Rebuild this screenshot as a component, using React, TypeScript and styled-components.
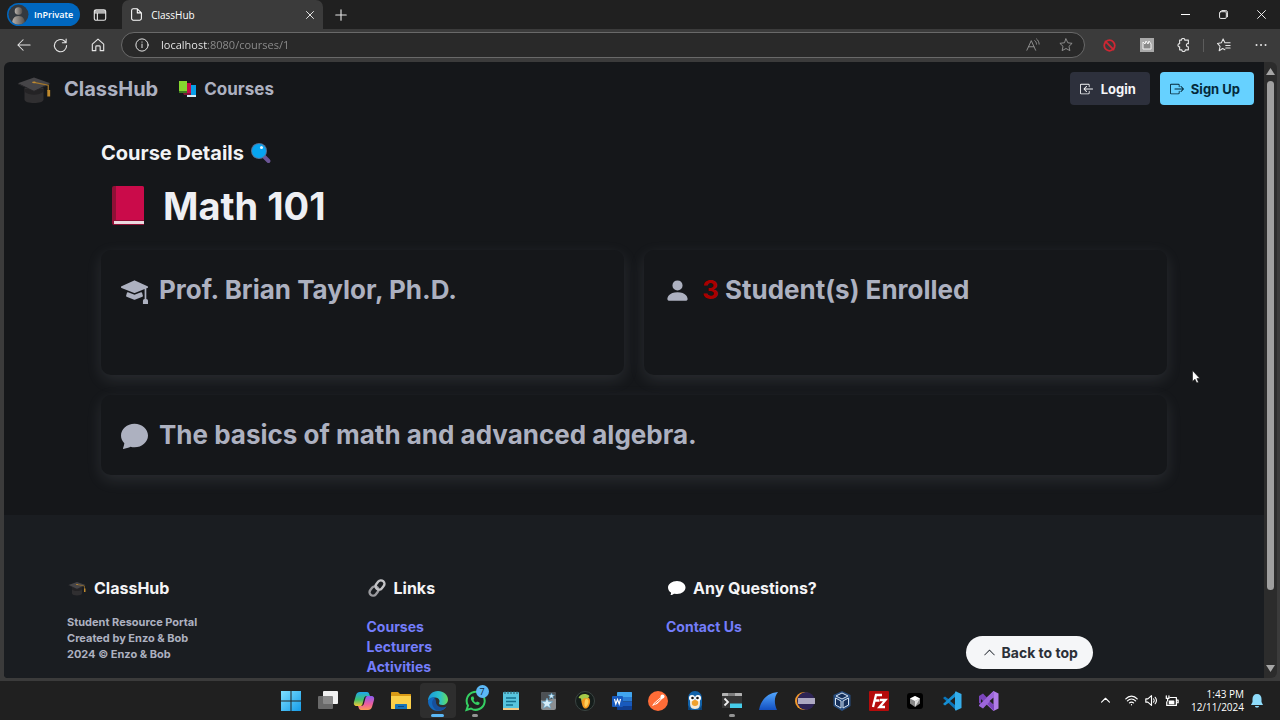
import React from 'react';
import styled, { createGlobalStyle } from 'styled-components';
import {
  BsBoxArrowInLeft,
  BsBoxArrowRight,
  BsChatFill,
  BsChevronUp,
  BsMortarboardFill,
  BsPersonFill,
} from 'react-icons/bs';

const GlobalStyle = createGlobalStyle`
  * { box-sizing: border-box; }
  html, body { margin: 0; background: #202020; }
  button { border: 0; padding: 0; background: none; color: inherit; font: inherit; }
  a { color: inherit; text-decoration: none; }
  h1, h2, h3, p, ul { margin: 0; padding: 0; }
  svg { display: block; flex: none; }
`;

const siteFont = "Inter, 'Liberation Sans', sans-serif";
const systemFont = "'Open Sans', 'Noto Sans', sans-serif";

/* ---------- browser window ---------- */

const Desktop = styled.div`
  position: relative;
  display: flex;
  flex-direction: column;
  height: 100vh;
  background: #3b3b3b;
  font-family: ${systemFont};
  color: #fff;
  overflow: hidden;
`;

const TabStrip = styled.header`
  display: flex;
  align-items: center;
  flex: none;
  height: 29px;
  padding-left: 7px;
  background: #202020;
`;

const ProfileButton = styled.button`
  display: flex;
  align-items: center;
  gap: 5px;
  height: 23px;
  padding: 0 7px 0 1px;
  border-radius: 12px;
  background: #0067bf;
  font-size: 9px;
  font-weight: 600;
`;

const ChromeButton = styled.button<{ $width?: number; $color?: string }>`
  display: flex;
  align-items: center;
  justify-content: center;
  flex: none;
  width: ${(p) => p.$width ?? 37}px;
  height: 28px;
  color: ${(p) => p.$color ?? '#e4e4e4'};
`;

const Tab = styled.div`
  display: flex;
  align-items: center;
  align-self: stretch;
  gap: 8px;
  width: 201px;
  margin-left: 3px;
  padding-left: 8px;
  border-radius: 7px 7px 0 0;
  background: #3b3b3b;
  font-size: 10px;
`;

const TabTitle = styled.span`
  flex: 1;
`;

const WindowControls = styled.div`
  display: flex;
  margin-left: auto;
`;

const Toolbar = styled.nav`
  display: flex;
  align-items: center;
  flex: none;
  height: 33px;
  padding: 0 1px 1px 5px;
`;

const AddressBar = styled.label`
  display: flex;
  align-items: center;
  flex: 1;
  height: 26px;
  margin: 0 6px 0 5px;
  padding: 0 2px 0 13px;
  border: 1px solid #696969;
  border-radius: 13px;
  background: #292929;
`;

const AddressInput = styled.input`
  flex: 1;
  min-width: 0;
  margin-left: 12px;
  padding: 0;
  border: 0;
  outline: 0;
  color: #9a9a9a;
  background: linear-gradient(to right, #f4f4f4 47px, #8f8f8f 47px);
  background-clip: text;
  -webkit-text-fill-color: transparent;
  font: 11px/20px ${systemFont};
`;

const Divider = styled.span`
  width: 1px;
  height: 13px;
  margin: 0 1px;
  background: #5c5c5c;
`;

const Viewport = styled.div`
  display: flex;
  flex: 1;
  min-height: 0;
  margin: 0 3px 3px 4px;
  border-radius: 6px 6px 6px 4px;
  overflow: hidden;
`;

const Scrollbar = styled.div`
  display: flex;
  flex-direction: column;
  align-items: center;
  flex: none;
  width: 13px;
  background: #2c2c2c;
`;

const ScrollArrow = styled.button`
  display: grid;
  place-items: center;
  width: 13px;
  height: 19px;
`;

const ScrollTrack = styled.div`
  flex: 1;
  width: 7px;
`;

const ScrollThumb = styled.div`
  height: 88%;
  border-radius: 4px;
  background: #9f9f9f;
`;

/* ---------- site ---------- */

const Site = styled.div`
  flex: 1;
  min-width: 0;
  overflow: hidden;
  background: #15171a;
  color: #adb1c0;
  font-family: ${siteFont};
  font-weight: 700;
`;

const NavBar = styled.nav`
  display: flex;
  align-items: center;
  gap: 10px;
  height: 53px;
  padding: 0 10px 0 11px;
`;

const Brand = styled.a`
  display: flex;
  align-items: center;
  gap: 11px;
  margin-right: 10px;
  font-size: 20px;
`;

const NavLink = styled.a`
  display: flex;
  align-items: center;
  gap: 6px;
  margin-right: auto;
  font-size: 17px;
`;

const NavButton = styled.button<{ $primary?: boolean }>`
  display: flex;
  align-items: center;
  gap: 7px;
  height: 33px;
  padding: 0 14px 0 10px;
  border-radius: 4px;
  background: ${(p) => (p.$primary ? '#66d1ff' : '#2d303c')};
  color: ${(p) => (p.$primary ? '#04293a' : '#f6f6f8')};
  font-size: 13px;
`;

const Main = styled.main`
  padding: 26px 97px 40px;
`;

const Eyebrow = styled.h2`
  display: flex;
  align-items: center;
  gap: 6px;
  color: #f2f3f5;
  font-size: 20px;
  line-height: 24px;
`;

const Title = styled.h1`
  display: flex;
  align-items: center;
  gap: 8px;
  margin: 17px 0 20px;
  color: #eeeff3;
  font-size: 38px;
  line-height: 48px;
`;

const Cards = styled.div`
  display: grid;
  grid-template-columns: 1fr 1fr;
  gap: 20px;
`;

const Card = styled.section<{ $wide?: boolean }>`
  grid-column: ${(p) => (p.$wide ? '1 / -1' : 'auto')};
  min-height: ${(p) => (p.$wide ? 80 : 125)}px;
  padding: 20px;
  border-radius: 10px;
  background: #15171a;
  box-shadow: 0 5px 15px rgba(173, 177, 192, 0.14);
`;

const CardTitle = styled.h3`
  display: flex;
  align-items: center;
  gap: 11px;
  font-size: 26px;
  line-height: 40px;
`;

const Count = styled.span`
  color: #a90000;
`;

const Footer = styled.footer`
  display: grid;
  grid-template-columns: repeat(4, 1fr);
  gap: 64px;
  padding: 61px 5% 40px;
  background: #1a1d21;
`;

const FooterHeading = styled.h3`
  display: flex;
  align-items: center;
  gap: 7px;
  color: #f4f4f6;
  font-size: 16px;
  line-height: 24px;
`;

const FooterText = styled.p`
  margin-top: 14px;
  font-size: 11px;
  line-height: 16px;
`;

const FooterLinks = styled.ul`
  margin-top: 17px;
  color: #747dfb;
  font-size: 14px;
  line-height: 20px;
  list-style: none;
`;

const BackToTop = styled.button`
  display: flex;
  align-items: center;
  gap: 6px;
  height: 33px;
  margin-top: 60px;
  padding: 0 15px 0 17px;
  border-radius: 17px;
  background: #f5f6f8;
  color: #2b3038;
  font-size: 14px;
  white-space: nowrap;
`;

/* ---------- taskbar ---------- */

const Taskbar = styled.footer`
  display: grid;
  grid-template-columns: 1fr minmax(0, 734px) 1fr;
  align-items: center;
  flex: none;
  height: 39px;
  background: #202020;
`;

const Apps = styled.div`
  grid-column: 2;
  display: flex;
  justify-content: space-between;
`;

const AppButton = styled.button<{ $active?: boolean; $running?: boolean }>`
  position: relative;
  display: grid;
  place-items: center;
  width: 36px;
  height: 35px;
  border-radius: 4px;
  background: ${(p) => (p.$active ? '#2e2e2e' : 'transparent')};
  &::after {
    content: '';
    position: absolute;
    bottom: 1px;
    width: ${(p) => (p.$active ? 13 : p.$running ? 6 : 0)}px;
    height: 3px;
    border-radius: 2px;
    background: ${(p) => (p.$active ? '#5cb8f5' : '#949494')};
  }
`;

const Badge = styled.span`
  position: absolute;
  top: 2px;
  right: 4px;
  width: 13px;
  height: 13px;
  border-radius: 50%;
  background: #5cb8f5;
  color: #10243a;
  font-size: 9px;
  line-height: 13px;
`;

const Tray = styled.div`
  display: flex;
  align-items: center;
  justify-content: flex-end;
  gap: 7px;
  padding-right: 17px;
`;

const Clock = styled.time`
  margin-left: 5px;
  font-size: 10px;
  line-height: 13px;
  text-align: right;
  white-space: nowrap;
`;

const TrayGap = styled.span`
  width: 1px;
`;

const Pointer = styled.svg`
  position: absolute;
  left: 1192px;
  top: 370px;
`;

/* ---------- drawings ---------- */

type LineProps = { size?: number; d: string; w?: number; children?: React.ReactNode };

const Line = ({ size = 16, d, w = 1, children }: LineProps) => (
  <svg width={size} height={size} viewBox="0 0 16 16" fill="none" stroke="currentColor" strokeWidth={w} strokeLinecap="round" strokeLinejoin="round">
    <path d={d} />
    {children}
  </svg>
);

const CapEmoji = ({ size }: { size: number }) => (
  <svg width={size} height={size} viewBox="0 0 40 40">
    <path d="M10 19v12c0 5 20 5 20 0V19z" fill="#302f31" />
    <path d="M10 23c5 4 15 4 20 0v-3H10z" fill="#242325" />
    <path d="M3 14 20 8l17 6-17 8z" fill="#464548" />
    <path d="M3 14v1l17 8 17-8v-1l-17 8z" fill="#29282b" />
    <path d="m20 13 15 3v6" fill="none" stroke="#a6782b" strokeWidth="1.3" />
    <path d="M34 21h3v7h-3z" fill="#c08a2d" />
    <ellipse cx="20" cy="13" rx="2" ry="1" fill="#bd8a35" />
  </svg>
);

const BooksEmoji = () => (
  <svg width="20" height="20" viewBox="0 0 20 20">
    <path d="M10 6h8v11h-8z" fill="#079ee8" />
    <path d="M9 16h9v2H9z" fill="#d7edf8" />
    <path d="M6 4h7v11H6z" fill="#c50c4a" />
    <path d="M5 14h8v2H6z" fill="#7d1434" />
    <path d="M1 2h8v11H1z" fill="#86d72f" />
    <path d="M1 12h8v2H1z" fill="#3c7a20" />
  </svg>
);

const LensEmoji = () => (
  <svg width="22" height="22" viewBox="0 0 22 22">
    <path d="m13.500 14 5 5" stroke="#6b5596" strokeWidth="4" strokeLinecap="round" />
    <circle cx="9" cy="9" r="8" fill="#55739a" />
    <circle cx="9" cy="9" r="7" fill="#07a5f1" />
    <circle cx="11.500" cy="5.500" r="1.500" fill="#e9f8ff" />
  </svg>
);

const BookEmoji = () => (
  <svg width="54" height="48" viewBox="0 0 54 48">
    <path d="M13 4h28a2 2 0 0 1 2 2v37H13a2 2 0 0 1-2-2V6a2 2 0 0 1 2-2z" fill="#8f1036" />
    <path d="M15 4h26a2 2 0 0 1 2 2v32H15z" fill="#ca0b4a" />
    <path d="M13 39h30v3H13z" fill="#ead9df" />
  </svg>
);

const LinkEmoji = () => (
  <svg width="20" height="20" viewBox="0 0 20 20" fill="none" strokeWidth="2.400">
    <rect x="-5" y="-3.500" width="10" height="7" rx="3.500" transform="translate(7 13) rotate(-50)" stroke="#9b9b9f" />
    <rect x="-5" y="-3.500" width="10" height="7" rx="3.500" transform="translate(13 7) rotate(-50)" stroke="#c4c4c7" />
  </svg>
);

const BubbleEmoji = () => (
  <svg width="20" height="20" viewBox="0 0 20 20">
    <path d="M11 3c5 0 8.500 3 8.500 6.500S16 16 11 16l-3-.3C7 16.500 6 17 4.500 17c.5-.8.6-1.600.5-2.400C3.300 13.500 2 11.700 2 9.500 2 6 6 3 11 3z" fill="#fff" />
  </svg>
);

const Avatar = () => (
  <svg width="21" height="21" viewBox="0 0 21 21">
    <defs>
      <clipPath id="avatar"><circle cx="10.500" cy="10.500" r="10" /></clipPath>
      <linearGradient id="body"><stop stopColor="#b9b2ac" /><stop offset="1" stopColor="#504d4b" /></linearGradient>
    </defs>
    <g clipPath="url(#avatar)">
      <path d="M0 0h21v21H0z" fill="#34393f" />
      <circle cx="10.500" cy="7" r="3.800" fill="url(#body)" />
      <path d="M4 21c0-6 2-9 6.500-9s6.500 3 6.500 9z" fill="url(#body)" />
    </g>
  </svg>
);

const Svg = ({ children }: { children: React.ReactNode }) => (
  <svg width="22" height="22" viewBox="0 0 22 22">{children}</svg>
);

type AppItem = { name: string; active?: boolean; running?: boolean; badge?: string; art: React.ReactNode };

const apps: AppItem[] = [
  { name: 'Start', art: <Svg><defs><linearGradient id="win" x2="1" y2="1"><stop stopColor="#7fe0ff" /><stop offset="1" stopColor="#149be8" /></linearGradient></defs><path d="M1 1h9.500v9.500H1zM11.500 1H21v9.500h-9.500zM1 11.500h9.500V21H1zM11.500 11.500H21V21h-9.500z" fill="url(#win)" /></Svg> },
  { name: 'Task view', art: <Svg><rect x="6" y="1" width="15" height="13" rx="1" fill="#f1f1f1" /><rect x="1" y="6" width="15" height="13" rx="1" fill="#777" fillOpacity=".85" /></Svg> },
  { name: 'Copilot', art: <Svg><defs><linearGradient id="cpa" x2="0" y2="1"><stop stopColor="#1ea7ee" /><stop offset=".55" stopColor="#41c26b" /><stop offset="1" stopColor="#f5c636" /></linearGradient><linearGradient id="cpb" x2="0" y2="1"><stop stopColor="#8a5cf0" /><stop offset=".6" stopColor="#ef5f9c" /><stop offset="1" stopColor="#fb9a55" /></linearGradient></defs><path d="M7 2h7c1.500 0 2 1 2.400 2.500L17 6h-3c-2 0-2.600 1-3 2.500L9.500 14c-.5 1.500-1 2-2.500 2H4c-3 0-3.500-2-3-4l2-7c.6-2 2-3 4-3z" fill="url(#cpa)" /><path d="M15 20H8c-1.500 0-2-1-2.400-2.500L5 16h3c2 0 2.600-1 3-2.500L12.500 8c.5-1.500 1-2 2.500-2h3c3 0 3.500 2 3 4l-2 7c-.6 2-2 3-4 3z" fill="url(#cpb)" /></Svg> },
  { name: 'File Explorer', art: <Svg><path d="M1 3c0-1 .5-1 1-1h6l2 2h10c1 0 1 .5 1 1v5H1z" fill="#d99a16" /><path d="M1 6h20v12c0 1-.5 1-1 1H2c-1 0-1-.5-1-1z" fill="#fbd04a" /><path d="M5 19v-4c0-1 .5-1 1-1h10c1 0 1 .5 1 1v4z" fill="#1673b8" /><path d="M8 16h6v1H8z" fill="#0c4980" /></Svg> },
  { name: 'Edge', active: true, art: <Svg><defs><linearGradient id="eda"><stop stopColor="#1698dc" /><stop offset=".6" stopColor="#2cc2c7" /><stop offset="1" stopColor="#66dc58" /></linearGradient></defs><path d="M1 11C1 5 5.500 1 11 1s10 4 10 8.500c0 3.500-2.500 5.500-5.500 5.500-2.500 0-3.800-1-3.500-2 1-1 1-5.500-4-5.500-3.500 0-6 2-7 3.500z" fill="url(#eda)" /><path d="M1 11c1-3 4-4.300 7-3.500-2 2-2 9 4 11 3 .8 5.800-.8 7.500-2C18 19 15 21 11 21 5 21 1 16.500 1 11z" fill="#1268bd" /><path d="M8 8c-4 2-4 8 1 12 4 1.500 8 0 10.500-3.500C13 19 8.500 15.500 9 11z" fill="#174f9b" /></Svg> },
  { name: 'WhatsApp', running: true, badge: '7', art: <Svg><path d="M2.500 20 4 15.500A9 9 0 1 1 7 18.500z" fill="none" stroke="#35cf62" strokeWidth="2" /><path d="M8 6.500c-2 1-1 4 1 6s5 3.500 6.500 1.500v-1.500L13 11.500l-1 1c-1 0-2.500-2-2.500-2.500l.7-1.200L9.500 6.500z" fill="#35cf62" /></Svg> },
  { name: 'Notepad', art: <Svg><rect x="3" y="2" width="16" height="18" rx="1" fill="#58c5df" /><path d="M3 18h16v2H3z" fill="#f2c984" /><path d="M6 8h10M6 11.500h10M6 15h7" stroke="#13708e" strokeWidth="1.300" /><path d="M5 1v3M8 1v3M11 1v3M14 1v3M17 1v3" stroke="#2a5463" /></Svg> },
  { name: 'Anki', art: <Svg><rect x="4" y="2" width="15" height="18" rx="2" fill="#8b8e91" /><path d="M6 2h11c1.500 0 2 1 2 2v5c-5-1-9 3-15 1V4c0-1 .5-2 2-2z" fill="#4d5155" /><path d="m10 8 1.500 3.500 4 .3-3 2.500 1 4L10 16l-3.500 2.300 1-4-3-2.500 4-.3zM14.500 3l.8 2 2.200.2-1.700 1.300.6 2.200-1.900-1.200-2 1.200.6-2.200-1.600-1.300 2.200-.2z" fill="#d6eefa" stroke="#5ba3cd" strokeWidth=".6" /></Svg> },
  { name: 'FL Studio', art: <Svg><circle cx="11" cy="11" r="9.500" fill="#151d1b" stroke="#3a4442" /><path d="M9 8c3-2 6.500-1 7 2 .5 4-1.500 8-4 8.500S8.500 16 8 14 6.500 9.500 9 8z" fill="#f49a20" /><path d="M12 9c3 0 3 3 1.500 6s-3 2-3 0 0-5 1.500-6z" fill="#ffd05a" /><path d="M4.500 8c1.500-4 7-5.500 11-2l-2 2.500L10 8l-2.500 3L7 8.500z" fill="#a3c94a" /></Svg> },
  { name: 'Word', art: <Svg><path d="M7 2h13c1 0 1 .5 1 1v4H6V3c0-1 .5-1 1-1z" fill="#41a5ee" /><path d="M6 7h15v4.500H6z" fill="#2b7cd3" /><path d="M6 11.500h15V16H6z" fill="#185abd" /><path d="M6 16h15v3c0 1-.5 1-1 1H7c-1 0-1-.5-1-1z" fill="#103f91" /><rect x="1" y="6" width="11" height="11" rx="1" fill="#185abd" /><path d="m3.500 9 1.300 5L6.500 9.500 8.200 14l1.300-5" fill="none" stroke="#fff" strokeWidth="1.200" /></Svg> },
  { name: 'Postman', art: <Svg><circle cx="11" cy="11" r="10" fill="#ff6c37" /><path d="m5 16 2-3 7-6 2 1-6 6z" fill="#fff" /><circle cx="15.500" cy="6.500" r="2" fill="#fff" /><path d="m7.500 14 6-5" stroke="#ff6c37" /></Svg> },
  { name: 'Penguin', art: <Svg><path d="M4 20V9c0-5 3-8 7-8s7 3 7 8v11z" fill="#1262a8" /><path d="M6 10c0 6 0 9 5 9s5-3 5-9z" fill="#f3ead8" /><circle cx="8" cy="8" r="3" fill="#fff" /><circle cx="14" cy="8" r="3" fill="#fff" /><circle cx="8.500" cy="8" r="1.300" fill="#111" /><circle cx="13.500" cy="8" r="1.300" fill="#111" /><ellipse cx="11" cy="13" rx="3.200" ry="3" fill="#f0a12c" /><path d="M4 20v-5l3 5zM18 20v-5l-3 5z" fill="#0d4277" /></Svg> },
  { name: 'Terminal', running: true, art: <Svg><path d="M1 4c0-1 .5-1 1-1h18c1 0 1 .5 1 1v3H1z" fill="#b2b2b2" /><path d="M7 3h7v4H7z" fill="#7d7d7d" /><path d="M1 6h20v12H1z" fill="#363636" /><path d="m3.500 8.500 3.500 3.500L3.500 15.500" fill="none" stroke="#eee" strokeWidth="1.800" /><path d="M9 13.500h12V18H9z" fill="#46cdea" /></Svg> },
  { name: 'Wireshark', art: <Svg><defs><linearGradient id="shark" x2="0" y2="1"><stop stopColor="#53a8ff" /><stop offset="1" stopColor="#124fc0" /></linearGradient></defs><path d="M1 20C3 10 9 3 20 2c-4 5-4 11-1 18z" fill="url(#shark)" /></Svg> },
  { name: 'Eclipse', art: <Svg><circle cx="10" cy="11" r="9" fill="#f39a2b" /><circle cx="12" cy="11" r="9" fill="#2e2455" /><path d="M4 9h17M4 11h17M4 13h17" stroke="#d8d5e6" strokeWidth="1.500" /></Svg> },
  { name: 'VirtualBox', art: <Svg><path d="m11 1 8.500 4v11L11 21l-8.500-5V5z" fill="#284e80" /><path d="m11 3 6 3-6 3-6-3zM4.500 8 10 11v7l-5.500-3zM17.500 8 12 11v7l5.500-3z" fill="#16305a" stroke="#d5e3f2" /></Svg> },
  { name: 'FileZilla', art: <Svg><rect x="1" y="1" width="20" height="20" rx="1" fill="#b50b0b" /><path d="M5 17 8 5h6M6.500 10.500h5M12 10h5.500l-6 7H17" fill="none" stroke="#fff" strokeWidth="2.300" /></Svg> },
  { name: 'Cursor', art: <Svg><rect x="3" y="3" width="16" height="16" rx="3" fill="#000" /><path d="m11 6 5 2.500v5L11 17l-5-3.500v-5z" fill="#888" /><path d="m11 6 5 2.500L11 11 6 8.500z" fill="#fff" /><path d="M16 8.500 11 17v-6z" fill="#ddd" /></Svg> },
  { name: 'VS Code', art: <Svg><path d="m2 8 2-1.500L15.500 15v5.500z" fill="#0a75bb" /><path d="m2 14 2 1.500L15.500 7V1.500z" fill="#168fd3" /><path d="M15 1.500 20.500 4v14L15 20.500c-.8 0-1-.5-1-1v-17c0-.5.2-1 1-1z" fill="#35aeeb" /><path d="m14 7-5 4 5 4z" fill="#202020" /></Svg> },
  { name: 'Visual Studio', art: <Svg><path d="m15.500 1 5 2.500v15l-5 2.500L5 11z" fill="#b17de8" /><path d="m1 6 4-2.500L16 15v6L6 11l-3 3-2-1z" fill="#7b45bc" /><path d="m1 16 4 2.500L16 7V1L1 15z" fill="#9c66da" /><path d="m15.500 7.500-4 3.500 4 3.500zM3 9l2 2-2 2z" fill="#202020" /></Svg> },
];

export default function App() {
  return (
    <Desktop>
      <GlobalStyle />
      <TabStrip>
        <ProfileButton><Avatar />InPrivate</ProfileButton>
        <ChromeButton $width={39} aria-label="Tab actions">
          <Line size={14} w={1.3} d="M3.500 2h9a2 2 0 0 1 2 2v8a2 2 0 0 1-2 2h-9a2 2 0 0 1-2-2V4a2 2 0 0 1 2-2zM5 6v8M1.500 5.500h13M2 3.500h12" />
        </ChromeButton>
        <Tab>
          <Line size={13} w={1.3} d="M4 1h5l5 5v7a2 2 0 0 1-2 2H4a2 2 0 0 1-2-2V3a2 2 0 0 1 2-2zM9 1v5h5" />
          <TabTitle>ClassHub</TabTitle>
          <ChromeButton $width={26} aria-label="Close tab"><Line size={8} w={2} d="m1 1 14 14M15 1 1 15" /></ChromeButton>
        </Tab>
        <ChromeButton $width={35} aria-label="New tab"><Line size={12} w={1.5} d="M8 1v14M1 8h14" /></ChromeButton>
        <WindowControls>
          <ChromeButton $width={38} $color="#fff" aria-label="Minimize"><Line size={9} w={2} d="M0 8h16" /></ChromeButton>
          <ChromeButton $width={38} $color="#fff" aria-label="Restore"><Line size={9} w={1.6} d="M3 3h8a2 2 0 0 1 2 2v8a2 2 0 0 1-2 2H3a2 2 0 0 1-2-2V5a2 2 0 0 1 2-2zM5 1h7a3 3 0 0 1 3 3v8" /></ChromeButton>
          <ChromeButton $width={38} $color="#fff" aria-label="Close"><Line size={9} w={1.6} d="m1 1 14 14M15 1 1 15" /></ChromeButton>
        </WindowControls>
      </TabStrip>

      <Toolbar>
        <ChromeButton aria-label="Back"><Line size={14} w={1.2} d="M15 8H1M7 2 1 8l6 6" /></ChromeButton>
        <ChromeButton aria-label="Refresh"><Line size={15} w={1.2} d="M14.500 8A6.500 6.500 0 1 1 12 3l2 2M14 1v4h-4" /></ChromeButton>
        <ChromeButton aria-label="Home"><Line size={14} w={1.3} d="M1.500 7 8 1.200 14.500 7v7.500h-4V10a1 1 0 0 0-1-1h-3a1 1 0 0 0-1 1v4.500h-4z" /></ChromeButton>
        <AddressBar>
          <Line size={14} d="M8 7v4M8 4.500v.3"><circle cx="8" cy="8" r="7" /></Line>
          <AddressInput aria-label="Address" defaultValue="localhost:8080/courses/1" />
          <ChromeButton $width={33} $color="#999" aria-label="Read aloud"><Line size={14} d="M1 14 6 3l5 11M3 10h6M10 3c1.500 1 2 2.500 2 4M12 1c2 1.500 3 4 3 6" /></ChromeButton>
          <ChromeButton $width={33} $color="#999" aria-label="Favorite"><Line size={14} d="m8 1 2.100 4.500 4.900.6-3.600 3.400 1 4.900L8 12l-4.400 2.400 1-4.900L1 6.100l4.900-.6z" /></ChromeButton>
        </AddressBar>
        <ChromeButton $color="#cf2733" aria-label="Blocker"><Line size={13} w={2.2} d="m3 3 10 10"><circle cx="8" cy="8" r="6.500" /></Line></ChromeButton>
        <ChromeButton aria-label="Extension">
          <svg width="14" height="14" viewBox="0 0 14 14"><path d="M0 0h14v14H0z" fill="#a9a9a9" /><path d="M3 11V4l2 2 1-3 2 3 1-3 2 3v5z" fill="#898989" stroke="#f3f3f3" /></svg>
        </ChromeButton>
        <ChromeButton aria-label="Extensions"><Line size={14} w={1.3} d="M5 2.500a2 2 0 0 1 4 0h4v4c-3-1-3 4 0 3.500v3.500H9.500a2 2 0 0 1-4 0H3V10C.5 10.500.5 6 3 6.500v-4z" /></ChromeButton>
        <Divider />
        <ChromeButton aria-label="Favorites"><Line size={14} w={1.2} d="M9 13.500 6.500 12l-4 2.500 1-5L0.500 6.200 5 5.500 7 1l2 4.500h6M10 8.500h5M10 11.500h5" /></ChromeButton>
        <ChromeButton aria-label="Settings"><Line size={12} w={2.6} d="M2 8h.1M8 8h.1M14 8h.1" /></ChromeButton>
      </Toolbar>

      <Viewport>
        <Site>
          <NavBar>
            <Brand href="#"><CapEmoji size={38} />ClassHub</Brand>
            <NavLink href="#"><BooksEmoji />Courses</NavLink>
            <NavButton><BsBoxArrowInLeft size={14} />Login</NavButton>
            <NavButton $primary><BsBoxArrowRight size={14} />Sign Up</NavButton>
          </NavBar>
          <Main>
            <Eyebrow>Course Details <LensEmoji /></Eyebrow>
            <Title><BookEmoji />Math 101</Title>
            <Cards>
              <Card><CardTitle><BsMortarboardFill size={27} />Prof. Brian Taylor, Ph.D.</CardTitle></Card>
              <Card><CardTitle><BsPersonFill size={27} /><span><Count>3</Count> Student(s) Enrolled</span></CardTitle></Card>
              <Card $wide><CardTitle><BsChatFill size={27} />The basics of math and advanced algebra.</CardTitle></Card>
            </Cards>
          </Main>
          <Footer>
            <section>
              <FooterHeading><CapEmoji size={20} />ClassHub</FooterHeading>
              <FooterText>Student Resource Portal<br />Created by Enzo &amp; Bob<br />2024 © Enzo &amp; Bob</FooterText>
            </section>
            <section>
              <FooterHeading><LinkEmoji />Links</FooterHeading>
              <FooterLinks>
                <li><a href="#">Courses</a></li>
                <li><a href="#">Lecturers</a></li>
                <li><a href="#">Activities</a></li>
              </FooterLinks>
            </section>
            <section>
              <FooterHeading><BubbleEmoji />Any Questions?</FooterHeading>
              <FooterLinks><li><a href="#">Contact Us</a></li></FooterLinks>
            </section>
            <section>
              <BackToTop><BsChevronUp size={13} />Back to top</BackToTop>
            </section>
          </Footer>
        </Site>
        <Scrollbar>
          <ScrollArrow aria-label="Scroll up"><svg width="9" height="7" viewBox="0 0 9 7"><path d="M4.500 0 9 7H0z" fill="#a6a6a6" /></svg></ScrollArrow>
          <ScrollTrack><ScrollThumb /></ScrollTrack>
          <ScrollArrow aria-label="Scroll down"><svg width="9" height="7" viewBox="0 0 9 7"><path d="M4.500 7 9 0H0z" fill="#a6a6a6" /></svg></ScrollArrow>
        </Scrollbar>
      </Viewport>

      <Taskbar>
        <Apps>
          {apps.map((app) => (
            <AppButton key={app.name} aria-label={app.name} $active={app.active} $running={app.running}>
              {app.art}
              {app.badge && <Badge>{app.badge}</Badge>}
            </AppButton>
          ))}
        </Apps>
        <Tray>
          <Line size={9} w={2} d="m1 11 7-7 7 7" />
          <TrayGap />
          <Line size={13} w={1.5} d="M1 6c4-4.500 10-4.500 14 0M3 8.500c3-3 7-3 10 0M5.500 11c1.500-1.500 3.500-1.500 5 0M8 13.200v.1" />
          <Line size={13} w={1.4} d="M1 6h2.500L8 2v12l-4.500-4H1zM10.500 6c1 1 1 3 0 4M12.500 4c2 2.500 2 5.500 0 8" />
          <Line size={14} w={1.4} d="M6 4h7v9H2V9M13 7h2v3h-2M1.500 2v3h3V2M3 5v3"><path d="M5 8h5v3H5z" fill="currentColor" /></Line>
          <Clock>1:43 PM<br />12/11/2024</Clock>
          <svg width="12" height="14" viewBox="0 0 12 14"><path d="M6 0c3 0 4.500 2 4.500 5v3L12 11H0l1.500-3V5C1.500 2 3 0 6 0zM4 12h4c0 2-4 2-4 0z" fill="#8fdcfb" /></svg>
        </Tray>
      </Taskbar>
      <Pointer width="8" height="14" viewBox="0 0 8 14"><path d="M.5.500v11l2.500-2.300L4.700 13l1.800-.8L4.900 8.500h3z" fill="#fff" stroke="#111" strokeWidth=".6" /></Pointer>
    </Desktop>
  );
}
